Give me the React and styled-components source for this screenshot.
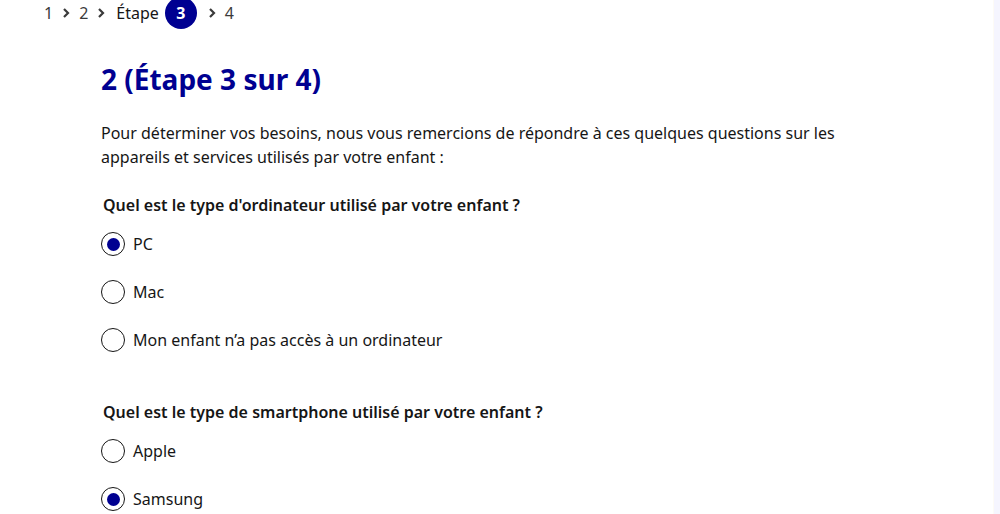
import styled, { createGlobalStyle } from "styled-components";

const GlobalStyle = createGlobalStyle`
  html, body {
    margin: 0;
    padding: 0;
    background: #ffffff;
    font-family: "Noto Sans", "Liberation Sans", sans-serif;
    color: #161616;
    overflow: hidden;
  }
`;

const Page = styled.div`
  display: flex;
  width: 1000px;
  height: 514px;
  overflow: hidden;
`;

const Main = styled.main`
  flex: 1;
  display: flex;
  flex-direction: column;
`;

const Aside = styled.aside`
  width: 6px;
  flex-shrink: 0;
  background: #f5f5fe;
  border-left: 1px solid #fdfbf6;
`;

const Breadcrumb = styled.nav`
  display: flex;
  align-items: center;
  gap: 8px;
  height: 32px;
  margin-top: -3px;
  padding-left: 44px;
  font-size: 16px;
  color: #3a3a3a;
`;

const Crumb = styled.span`
  color: ${(p) => (p.$strong ? "#161616" : "#3a3a3a")};
  padding-left: ${(p) => (p.$strong ? "2px" : "0")};
`;

const CurrentStep = styled.span`
  display: inline-flex;
  align-items: center;
  justify-content: center;
  width: 32px;
  height: 32px;
  margin: 0 2px 0 -2px;
  border-radius: 50%;
  background: #000091;
  color: #ffffff;
  font-weight: 700;
  font-size: 16px;
`;

const Content = styled.section`
  display: flex;
  flex-direction: column;
  padding-left: 101px;
  padding-top: 32px;
`;

const Title = styled.h1`
  margin: 0;
  font-size: 28px;
  line-height: 36px;
  font-weight: 700;
  color: #000091;
`;

const Intro = styled.p`
  margin: 24px 0 0;
  width: 760px;
  font-size: 16px;
  line-height: 24px;
`;

const Fieldset = styled.fieldset`
  border: 0;
  margin: ${(p) => p.$gap}px 0 0;
  padding: 0;
  display: flex;
  flex-direction: column;
  gap: 24px;
`;

const Legend = styled.legend`
  padding: 0 0 0 2px;
  margin-bottom: 15px;
  font-size: 16px;
  line-height: 24px;
  font-weight: 600;
`;

const Option = styled.label`
  display: flex;
  align-items: center;
  gap: 8px;
  height: 24px;
  font-size: 16px;
  line-height: 24px;
`;

const Radio = styled.span`
  width: 24px;
  height: 24px;
  box-sizing: border-box;
  border: 1.5px solid #161616;
  border-radius: 50%;
  display: flex;
  align-items: center;
  justify-content: center;
  flex-shrink: 0;

  &::after {
    content: "";
    width: 13px;
    height: 13px;
    border-radius: 50%;
    background: #000091;
    display: ${(p) => (p.$checked ? "block" : "none")};
  }
`;

const Chevron = () => (
  <svg width="10" height="12" viewBox="0 0 10 12" aria-hidden="true">
    <path d="M3 2 L7 6 L3 10" fill="none" stroke="#3a3a3a" strokeWidth="2.2" />
  </svg>
);

const questions = [
  {
    label: "Quel est le type d'ordinateur utilisé par votre enfant ?",
    options: ["PC", "Mac", "Mon enfant n’a pas accès à un ordinateur"],
    checked: 0,
    gap: 24,
  },
  {
    label: "Quel est le type de smartphone utilisé par votre enfant ?",
    options: ["Apple", "Samsung"],
    checked: 1,
    gap: 48,
  },
];

export default function App() {
  return (
    <>
      <GlobalStyle />
      <Page>
        <Main>
          <Breadcrumb>
            <Crumb>1</Crumb>
            <Chevron />
            <Crumb>2</Crumb>
            <Chevron />
            <Crumb $strong>Étape</Crumb>
            <CurrentStep>3</CurrentStep>
            <Chevron />
            <Crumb>4</Crumb>
          </Breadcrumb>
          <Content>
            <Title>2 (Étape 3 sur 4)</Title>
            <Intro>
              Pour déterminer vos besoins, nous vous remercions de répondre à
              ces quelques questions sur les appareils et services utilisés par
              votre enfant :
            </Intro>
            {questions.map((q) => (
              <Fieldset key={q.label} $gap={q.gap}>
                <Legend>{q.label}</Legend>
                {q.options.map((o, i) => (
                  <Option key={o}>
                    <Radio $checked={i === q.checked} />
                    {o}
                  </Option>
                ))}
              </Fieldset>
            ))}
          </Content>
        </Main>
        <Aside />
      </Page>
    </>
  );
}
